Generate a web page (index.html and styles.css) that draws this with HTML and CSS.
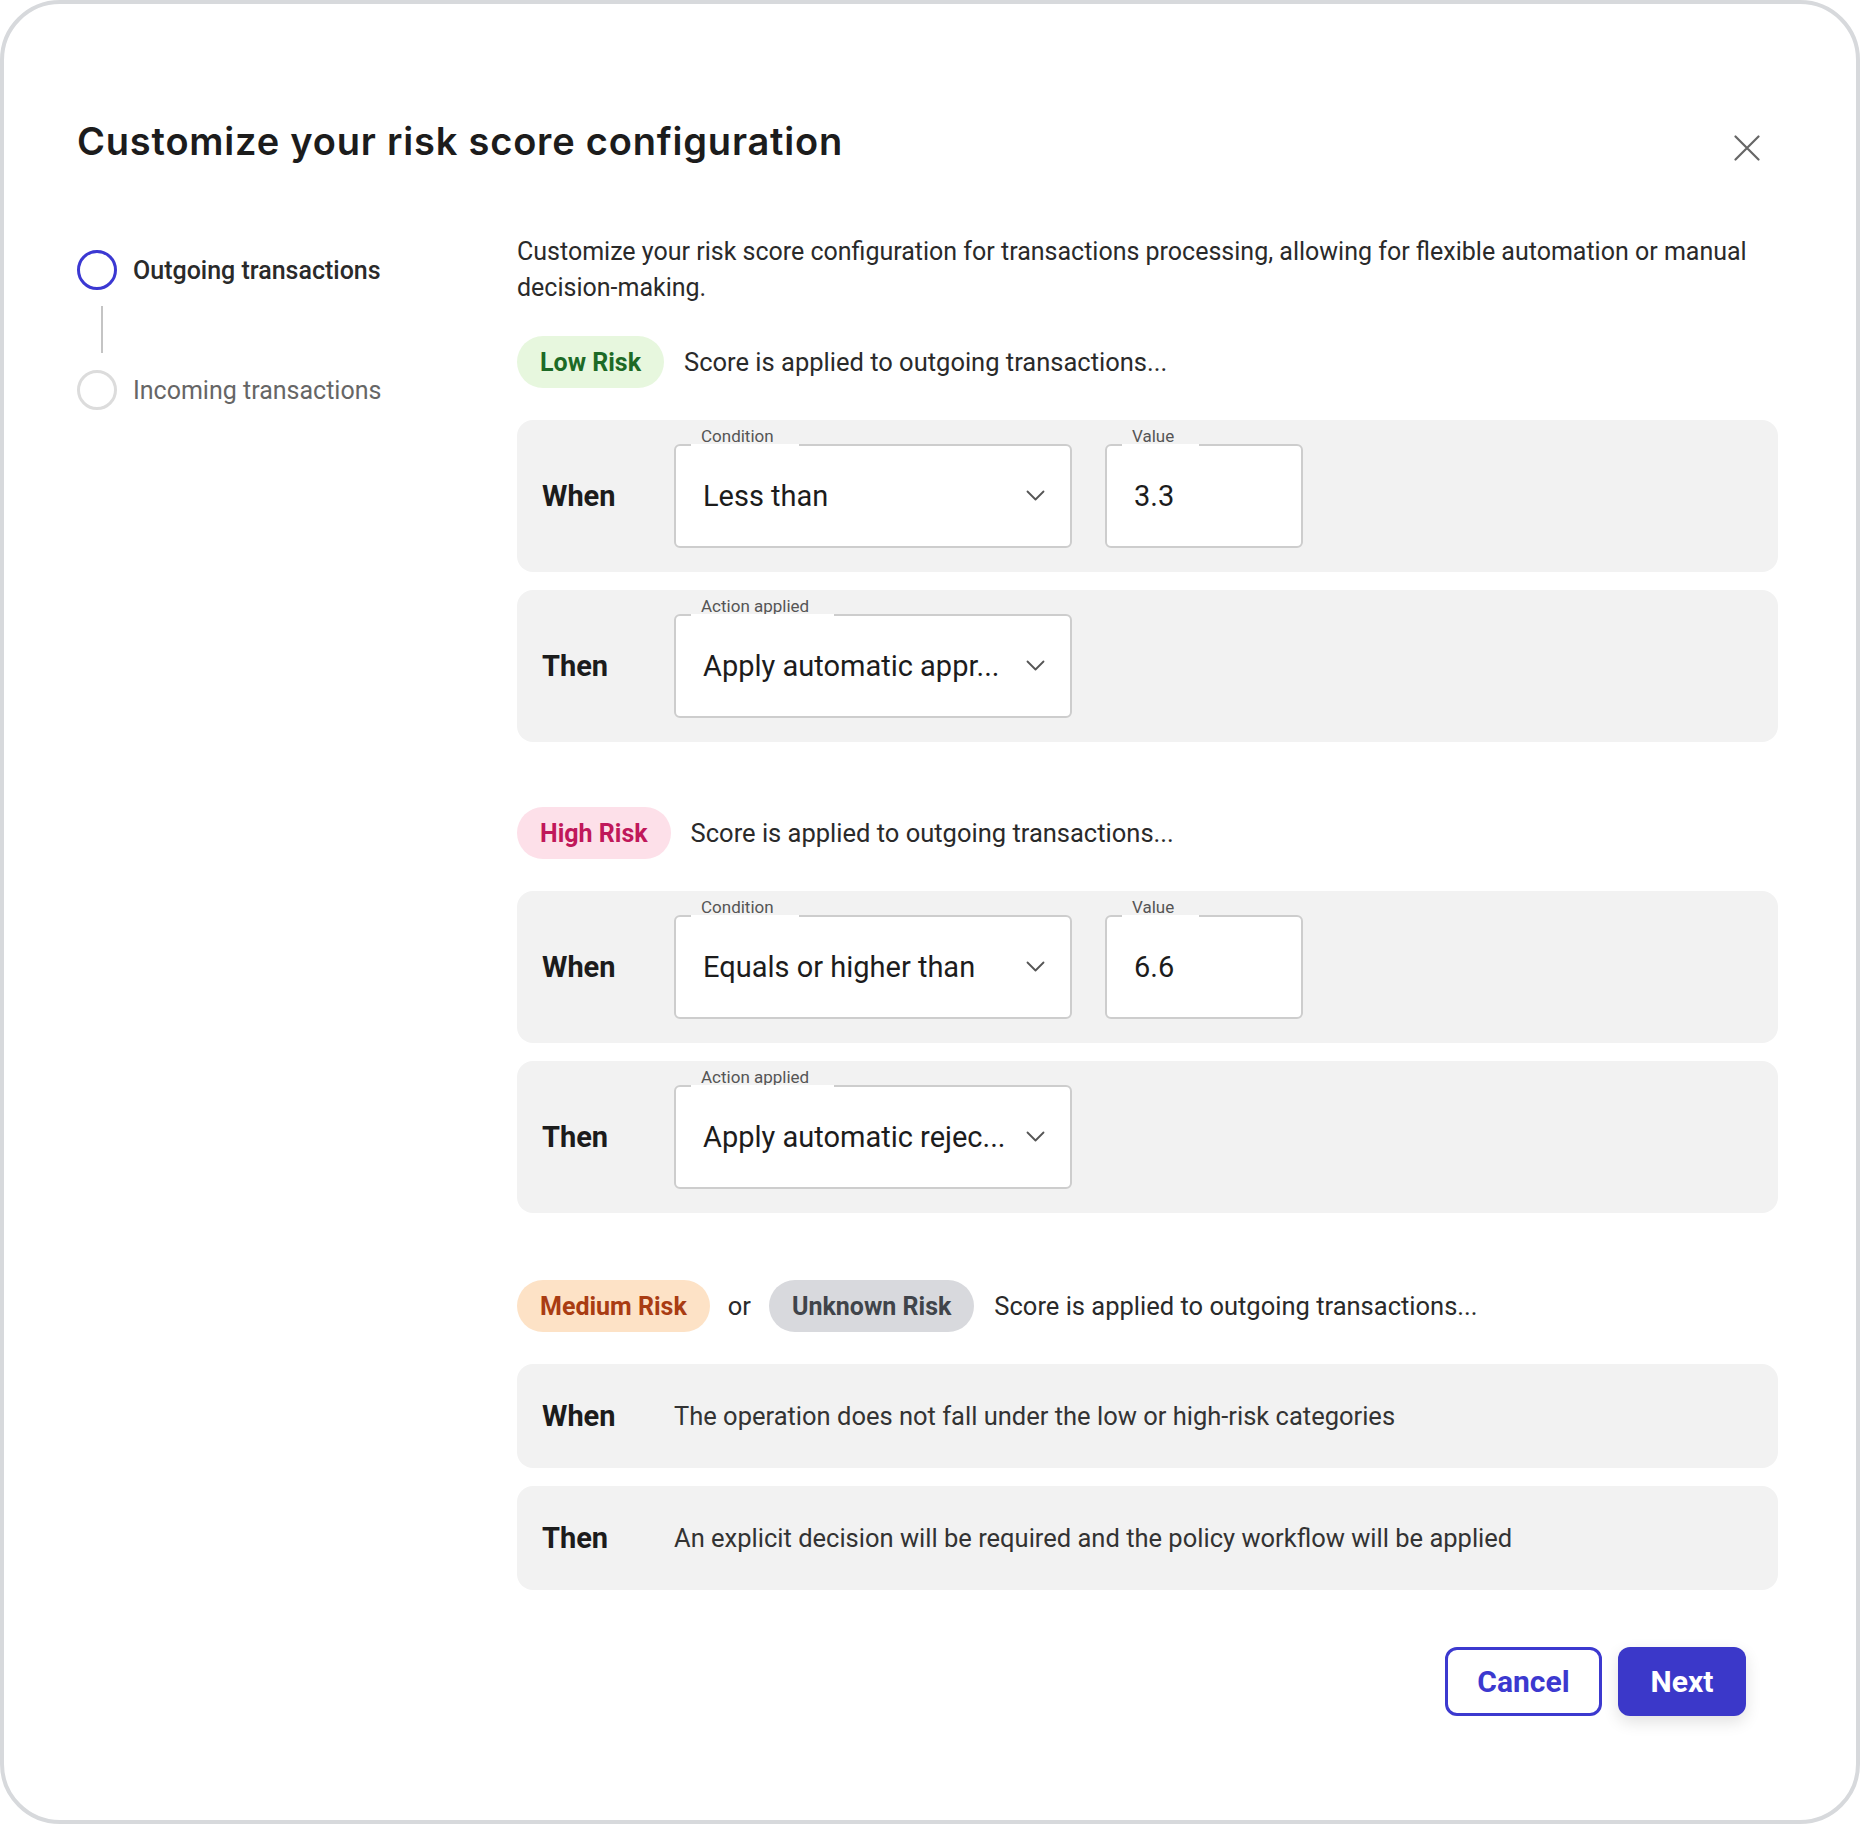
FILE: index.html
```html
<!DOCTYPE html>
<html lang="en">
<head>
  <meta charset="UTF-8">
  <meta name="viewport" content="width=device-width, initial-scale=1.0">
  <title>Risk score configuration</title>
  <link rel="stylesheet" href="styles.css">
</head>
<body>
  <div class="modal">
    <div class="modal-header">
      <h1>Customize your risk score configuration</h1>
      <button class="close-btn" type="button" aria-label="Close">
        <svg width="26" height="26" viewBox="0 0 26 26"><path d="M1.5 1.5L24.5 24.5M24.5 1.5L1.5 24.5" stroke="#666" stroke-width="2.2" fill="none" stroke-linecap="round"/></svg>
      </button>
    </div>

    <div class="modal-body">
      <!-- Langkah -->
      <ol class="steps">
        <li class="step active"><span class="step-dot"></span>Outgoing transactions</li>
        <li class="step-line"></li>
        <li class="step"><span class="step-dot"></span>Incoming transactions</li>
      </ol>

      <div class="content">
        <p class="intro">Customize your risk score configuration for transactions processing, allowing for flexible automation or manual decision-making.</p>

        <!-- Low risk -->
        <section class="risk-group">
          <div class="risk-head">
            <span class="badge badge-low">Low Risk</span>
            <span>Score is applied to outgoing transactions...</span>
          </div>
          <div class="rule">
            <span class="rule-label">When</span>
            <div class="field field-select">
              <span class="field-label">Condition</span>
              <span class="field-value">Less than</span>
              <svg class="chevron" width="19" height="12" viewBox="0 0 19 12"><path d="M1.5 1.5l8 8 8-8" stroke="#555" stroke-width="1.8" fill="none" stroke-linecap="round" stroke-linejoin="round"/></svg>
            </div>
            <div class="field field-input">
              <span class="field-label">Value</span>
              <span class="field-value">3.3</span>
            </div>
          </div>
          <div class="rule">
            <span class="rule-label">Then</span>
            <div class="field field-select">
              <span class="field-label">Action applied</span>
              <span class="field-value">Apply automatic appr...</span>
              <svg class="chevron" width="19" height="12" viewBox="0 0 19 12"><path d="M1.5 1.5l8 8 8-8" stroke="#555" stroke-width="1.8" fill="none" stroke-linecap="round" stroke-linejoin="round"/></svg>
            </div>
          </div>
        </section>

        <!-- High risk -->
        <section class="risk-group">
          <div class="risk-head">
            <span class="badge badge-high">High Risk</span>
            <span>Score is applied to outgoing transactions...</span>
          </div>
          <div class="rule">
            <span class="rule-label">When</span>
            <div class="field field-select">
              <span class="field-label">Condition</span>
              <span class="field-value">Equals or higher than</span>
              <svg class="chevron" width="19" height="12" viewBox="0 0 19 12"><path d="M1.5 1.5l8 8 8-8" stroke="#555" stroke-width="1.8" fill="none" stroke-linecap="round" stroke-linejoin="round"/></svg>
            </div>
            <div class="field field-input">
              <span class="field-label">Value</span>
              <span class="field-value">6.6</span>
            </div>
          </div>
          <div class="rule">
            <span class="rule-label">Then</span>
            <div class="field field-select">
              <span class="field-label">Action applied</span>
              <span class="field-value">Apply automatic rejec...</span>
              <svg class="chevron" width="19" height="12" viewBox="0 0 19 12"><path d="M1.5 1.5l8 8 8-8" stroke="#555" stroke-width="1.8" fill="none" stroke-linecap="round" stroke-linejoin="round"/></svg>
            </div>
          </div>
        </section>

        <!-- Medium / unknown -->
        <section class="risk-group risk-group-last">
          <div class="risk-head">
            <span class="badge badge-medium">Medium Risk</span>
            <span class="or">or</span>
            <span class="badge badge-unknown">Unknown Risk</span>
            <span>Score is applied to outgoing transactions...</span>
          </div>
          <div class="rule rule-text">
            <span class="rule-label">When</span>
            <span>The operation does not fall under the low or high-risk categories</span>
          </div>
          <div class="rule rule-text">
            <span class="rule-label">Then</span>
            <span>An explicit decision will be required and the policy workflow will be applied</span>
          </div>
        </section>
      </div>
    </div>

    <div class="modal-footer">
      <button class="btn btn-outline" type="button">Cancel</button>
      <button class="btn btn-primary" type="button">Next</button>
    </div>
  </div>
</body>
</html>
```

FILE: styles.css
```css
body {
  margin: 0;
  font-family: Roboto, "Liberation Sans", sans-serif;
  color: #222;
  background-color: #fff;
}

.modal {
  box-sizing: border-box;
  width: 1860px;
  height: 1824px;
  border: 4px solid #d7d9dc;
  border-radius: 60px;
  background-color: white;
  padding-left: 73px;
}

.modal-header {
  display: flex;
  justify-content: space-between;
  align-items: flex-start;
  padding-top: 114px;
  padding-right: 96px;
}

.modal-header h1 {
  margin: 0;
  font-family: Inter, Roboto, sans-serif;
  font-size: 38px;
  line-height: 46px;
  font-weight: 600;
  letter-spacing: 0.8px;
  color: #1c1c1c;
}

.close-btn {
  margin-top: 17px;
  padding: 0;
  border: none;
  background: none;
  cursor: pointer;
  line-height: 0;
}

.modal-body {
  display: flex;
  margin-top: 70px;
  margin-right: 78px;
}

/* Langkah di kiri */
.steps {
  list-style: none;
  margin: 16px 0 0 0;
  padding: 0;
  width: 440px;
  flex-shrink: 0;
}

.step {
  display: flex;
  align-items: center;
  height: 40px;
  font-size: 25px;
  color: #666;
}

.step.active {
  color: #2a2a2a;
  font-weight: 500;
}

.step-dot {
  box-sizing: border-box;
  width: 40px;
  height: 40px;
  margin-right: 16px;
  border: 3px solid #dcdcdc;
  border-radius: 50%;
}

.step.active .step-dot {
  border: 3.5px solid #3b38d2;
}

.step-line {
  width: 2px;
  height: 47px;
  margin: 16px 0 17px 24px;
  background-color: #c4c4c4;
}

.content {
  flex: 1;
  font-size: 25.5px;
  color: #2a2a2a;
}

.intro {
  margin: 0;
  font-size: 25px;
  line-height: 36px;
}

.risk-group {
  margin-top: 30px;
}

.risk-group + .risk-group {
  margin-top: 65px;
}

.risk-group-last.risk-group {
  margin-top: 67px;
}

.risk-head {
  display: flex;
  align-items: center;
  gap: 20px;
  margin-bottom: 32px;
}

.badge {
  display: inline-flex;
  align-items: center;
  height: 52px;
  padding: 0 23px;
  border-radius: 26px;
  font-size: 25px;
  font-weight: 700;
}

.badge-low {
  background-color: #e7f7de;
  color: #1d6a26;
}

.badge-high {
  background-color: #fde0e9;
  color: #c0185a;
}

.badge-medium {
  background-color: #fde2c6;
  color: #a93c12;
}

.badge-unknown {
  background-color: #d8d9dd;
  color: #40444a;
}

.or {
  margin: 0 -2px;
}

.rule {
  display: flex;
  align-items: center;
  gap: 33px;
  padding: 24px 25px;
  background-color: #f2f2f2;
  border-radius: 16px;
}

.rule + .rule {
  margin-top: 18px;
}

.rule-label {
  width: 99px;
  font-size: 29px;
  font-weight: 700;
  color: #1c1c1c;
}

.rule-text {
  box-sizing: border-box;
  height: 104px;
  padding-top: 0;
  padding-bottom: 0;
  color: #333;
}

.field {
  position: relative;
  box-sizing: border-box;
  display: flex;
  align-items: center;
  height: 104px;
  padding: 0 25px 0 27px;
  background-color: white;
  border: 2px solid #cdcdcd;
  border-radius: 6px;
  font-size: 29px;
  color: #1c1c1c;
}

.field-select {
  width: 398px;
}

.field-input {
  width: 198px;
}

.field-value {
  flex: 1;
}

.field-label {
  position: absolute;
  top: -17px;
  left: 15px;
  padding: 0 25px 0 10px;
  font-size: 17px;
  line-height: 15px;
  color: #555;
}

.field-label::after {
  content: "";
  position: absolute;
  left: 0;
  right: 0;
  bottom: -4px;
  height: 4px;
  background-color: white;
}

.chevron {
  flex-shrink: 0;
}

.modal-footer {
  display: flex;
  justify-content: flex-end;
  gap: 16px;
  margin-top: 57px;
  padding-right: 110px;
}

.btn {
  box-sizing: border-box;
  height: 69px;
  border-radius: 12px;
  font-family: Roboto, "Liberation Sans", sans-serif;
  font-size: 30px;
  font-weight: 700;
  cursor: pointer;
}

.btn-outline {
  width: 157px;
  background-color: white;
  border: 3px solid #3c39cf;
  color: #3c39cf;
}

.btn-primary {
  width: 128px;
  background-color: #3b38c9;
  border: none;
  color: white;
  box-shadow: 0 6px 16px rgba(0, 0, 0, 0.12);
}
```
